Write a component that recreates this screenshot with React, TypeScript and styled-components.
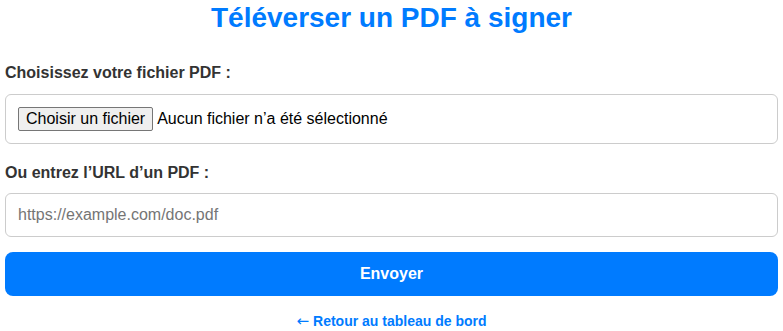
import React from "react";
import styled, { createGlobalStyle } from "styled-components";

const Global = createGlobalStyle`
  html, body { margin: 0; padding: 0; background: #fff; }
  body { font-family: "Liberation Sans", Arial, sans-serif; color: #333; }
  * { box-sizing: border-box; }
`;

const Page = styled.div`
  padding: 0 5px;
  display: flex;
  flex-direction: column;
`;

const Title = styled.h2`
  margin: 2px 0 30px;
  text-align: center;
  color: #007bff;
  font-size: 28px;
  font-weight: bold;
  line-height: normal;
`;

const Label = styled.label<{ $gap?: number }>`
  display: block;
  font-size: 16px;
  font-weight: bold;
  color: #333;
  line-height: 18px;
  margin-bottom: ${(p) => p.$gap ?? 12}px;
`;

const Box = styled.div<{ $mb: number }>`
  border: 1px solid #ccc;
  border-radius: 6px;
  padding: 12px;
  margin-bottom: ${(p) => p.$mb}px;
  display: flex;
  align-items: center;
  font-size: 16px;
  background: #fff;
`;

const FileButton = styled.button`
  font-family: "Liberation Sans", Arial, sans-serif;
  font-size: 16px;
  line-height: 18px;
  padding: 2px 7px;
  background: #efefef;
  border: 1px solid #767676;
  border-radius: 2px;
  color: #000;
  margin-right: 4px;
`;

const FileText = styled.span`
  color: #000;
  font-size: 16px;
  line-height: 18px;
`;

const UrlInput = styled.input`
  width: 100%;
  border: 1px solid #ccc;
  border-radius: 6px;
  padding: 12px;
  font-family: "Liberation Sans", Arial, sans-serif;
  font-size: 16px;
  line-height: 18px;
  height: 44px;
  margin-bottom: 15px;
  outline: none;
  &::placeholder { color: #757575; }
`;

const Submit = styled.button`
  width: 100%;
  height: 44px;
  background: #007bff;
  color: #fff;
  border: none;
  border-radius: 8px;
  font-family: "Liberation Sans", Arial, sans-serif;
  font-size: 16px;
  font-weight: bold;
`;

const Back = styled.a`
  display: block;
  margin-top: 17px;
  text-align: center;
  color: #007bff;
  font-size: 14px;
  font-weight: bold;
  text-decoration: none;
  line-height: 16px;
`;

const Arrow = styled.span`
  font-family: "DejaVu Sans", sans-serif;
  font-weight: normal;
  font-size: 15px;
  margin-right: 4px;
`;

export default function App() {
  return (
    <>
      <Global />
      <Page>
        <Title>Téléverser un PDF à signer</Title>
        <Label>Choisissez votre fichier PDF :</Label>
        <Box $mb={20}>
          <FileButton type="button">Choisir un fichier</FileButton>
          <FileText>Aucun fichier n’a été sélectionné</FileText>
        </Box>
        <Label $gap={11}>Ou entrez l’URL d’un PDF :</Label>
        <UrlInput type="text" placeholder="https://example.com/doc.pdf" />
        <Submit type="button">Envoyer</Submit>
        <Back href="#">
          <Arrow>←</Arrow>Retour au tableau de bord
        </Back>
      </Page>
    </>
  );
}
